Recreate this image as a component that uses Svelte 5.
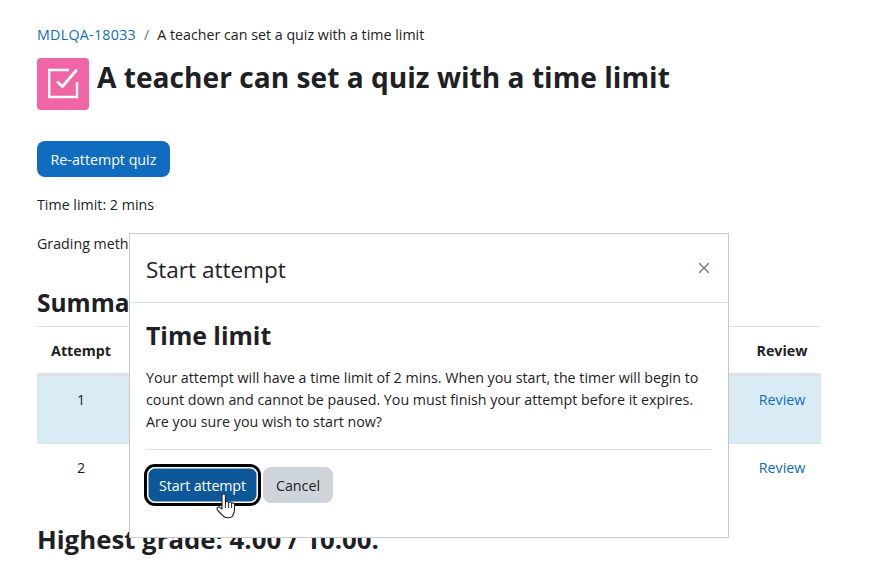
<script>
	const rows = [
		{ n: 1, hl: true },
		{ n: 2, hl: false }
	];
</script>

<main class="page">
	<nav class="crumbs">
		<a class="crumb-link" href="#c">MDLQA-18033</a>
		<span class="sep">/</span>
		<span>A teacher can set a quiz with a time limit</span>
	</nav>

	<header class="title">
		<div class="quiz-icon">
			<svg width="32" height="32" viewBox="0 0 32 32" fill="none" stroke="#fff" stroke-width="2.4">
				<path d="M30 14v15H2.200V2H22" />
				<path d="M10 13.500l5.500 5L30 1.500" stroke-width="2.800" />
			</svg>
		</div>
		<h1>A teacher can set a quiz with a time limit</h1>
	</header>

	<button class="btn primary reattempt">Re-attempt quiz</button>
	<p class="info first">Time limit: 2 mins</p>
	<p class="info">Grading method: Highest grade</p>

	<h3 class="summary">Summary of your previous attempts</h3>
	<div class="table">
		<div class="row head">
			<span>Attempt</span>
			<span>Review</span>
		</div>
		{#each rows as r}
			<div class="row" class:hl={r.hl}>
				<span>{r.n}</span>
				<a href="#r">Review</a>
			</div>
		{/each}
	</div>
	<h3 class="highest">Highest grade: 4.00 / 10.00.</h3>
</main>

<div class="dialog">
	<div class="dialog-head">
		<h5>Start attempt</h5>
		<svg class="close" width="12" height="12" viewBox="0 0 12 12" stroke="#6a737b" stroke-width="1.3">
			<path d="M1.200 1.200l9.600 9.600M10.800 1.200l-9.600 9.600" />
		</svg>
	</div>
	<div class="dialog-body">
		<h3>Time limit</h3>
		<p>Your attempt will have a time limit of 2 mins. When you start, the timer will begin to count down and cannot be paused. You must finish your attempt before it expires. Are you sure you wish to start now?</p>
		<hr />
		<div class="actions">
			<button class="btn primary focused">Start attempt</button>
			<button class="btn secondary">Cancel</button>
		</div>
	</div>
</div>

<svg class="cursor" width="20" height="26" viewBox="0 0 20 26">
	<path d="M6 2.500c0-2 3.400-2 3.400 0V9.500c.4-1.400 3-1.300 3.200.3.500-1.200 2.800-1 3 .6.600-1 2.900-.6 2.900 1.100v5.500c0 2.800-1.400 4.700-2.200 6.300-1.400 1.600-6 1.900-8.300.5C6.200 22 2.600 18.800 1.300 16.600.3 14.800 2.200 13.200 3.800 14.400L6 16z" fill="#fff" stroke="#23262b" stroke-width="1.100" stroke-linejoin="round" />
	<path d="M9.400 9.500v5.500M12.600 10v5M15.600 10.500v4.500" stroke="#23262b" stroke-width="1" fill="none" />
</svg>

<style>
	:global(body) {
		margin: 0;
		background: #fff;
		overflow: hidden;
		font-family: "Open Sans", "Noto Sans", sans-serif;
		font-size: 14.25px;
		color: #1d2125;
	}

	.page {
		height: 588px;
		box-sizing: border-box;
		padding: 25px 54px 0 37px;
		overflow: hidden;
	}

	a {
		color: #0f6cbf;
		text-decoration: none;
	}

	.crumb-link {
		letter-spacing: 0.27px;
	}

	.crumbs {
		display: flex;
		gap: 8px;
		line-height: 20px;
	}

	.sep {
		color: #6a737b;
	}

	.title {
		display: flex;
		gap: 8px;
		margin-top: 13px;
	}

	.quiz-icon {
		width: 52px;
		height: 52px;
		border-radius: 4px;
		background: #f065a5;
		display: flex;
		align-items: center;
		justify-content: center;
	}

	h1 {
		margin: -1px 0 0;
		font-size: 28.15px;
		line-height: 40px;
		font-weight: 700;
	}

	.btn {
		font: inherit;
		border: none;
		border-radius: 8px;
		height: 36px;
		padding: 0 13px;
		display: block;
	}

	.primary {
		background: #0f6cbf;
		color: #fff;
	}

	.secondary {
		background: #ced4da;
		color: #1d2125;
	}

	.reattempt {
		margin-top: 31px;
		padding: 0 13.500px;
	}

	.info {
		margin: 19px 0 0;
		line-height: 20px;
	}

	.first {
		margin-top: 18px;
	}

	.summary {
		margin: 32px 0 0;
		font-size: 24.500px;
		line-height: 34px;
	}

	.table {
		margin-top: 6px;
		border-top: 1px solid #dee2e6;
	}

	.row {
		display: flex;
		justify-content: space-between;
		padding: 14px 0 0;
		height: 68px;
		box-sizing: border-box;
		border-bottom: 1px solid #dee2e6;
		text-align: center;
	}

	.row > * {
		width: 78px;
		line-height: 20px;
	}

	.row > :first-child {
		width: 88px;
	}

	.row.head {
		height: 49px;
		font-weight: 700;
		border-bottom: 3px solid #dee2e6;
	}

	.row.hl {
		background: #d9ecf5;
	}

	.row:last-child {
		border-bottom: none;
		height: 50px;
	}

	.highest {
		margin: 28px 0 0;
		font-size: 25.800px;
		line-height: 34px;
	}

	.dialog {
		position: absolute;
		left: 129px;
		top: 233px;
		width: 600px;
		height: 305px;
		box-sizing: border-box;
		background: #fff;
		border: 1px solid #c8c8c8;
	}

	.dialog-head {
		height: 69px;
		box-sizing: border-box;
		border-bottom: 1px solid #dee2e6;
		display: flex;
		align-items: center;
		justify-content: space-between;
		padding: 0 18.500px 0 16px;
	}

	h5 {
		margin: 2px 0 0;
		font-size: 22.500px;
		font-weight: 400;
	}

	.dialog-body {
		padding: 15px 16px;
	}

	.dialog-body h3 {
		margin: 0;
		font-size: 24.800px;
		line-height: 34px;
	}

	.dialog-body p {
		margin: 15px 0 0;
		line-height: 22px;
	}

	hr {
		border: none;
		border-top: 1px solid #dee2e6;
		margin: 16px 0 0;
	}

	.actions {
		display: flex;
		gap: 5px;
		margin-top: 17px;
	}

	.focused {
		background: #0c5798;
		box-shadow: inset 0 0 0 1.500px #fff, 0 0 0 3px #000;
		border-radius: 8px;
		margin-left: 1px;
		padding: 0 12px;
		letter-spacing: -0.12px;
	}

	.cursor {
		position: absolute;
		left: 216px;
		top: 493px;
	}
</style>
